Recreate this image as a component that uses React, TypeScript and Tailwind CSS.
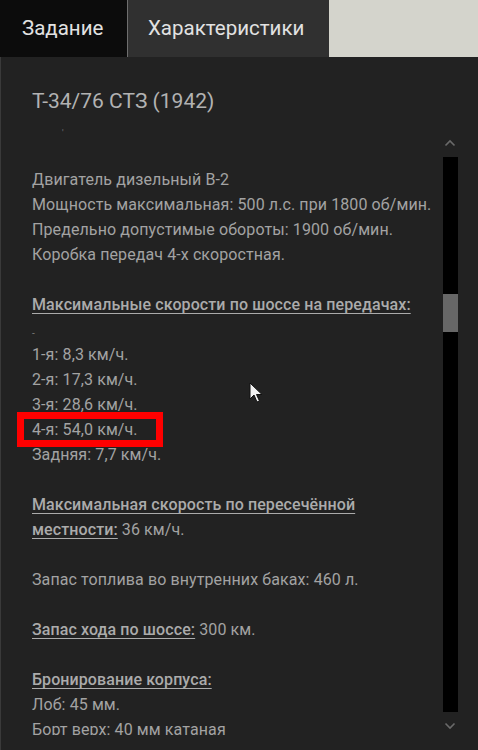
import React from "react";

const FONT = { fontFamily: "Roboto, 'Liberation Sans', sans-serif" };

// Body line: 25px row
function Line({ children, className = "" }: { children?: React.ReactNode; className?: string }) {
  return <div className={"relative h-[25px] leading-[25px] whitespace-nowrap " + className}>{children}</div>;
}

function Heading({ children }: { children: React.ReactNode }) {
  return (
    <span className="font-medium text-[#ababab] underline decoration-1 underline-offset-[3px]">
      {children}
    </span>
  );
}

function Chevron({ down }: { down?: boolean }) {
  return (
    <svg width="12" height="8" viewBox="0 0 12 8" className="block">
      <path
        d={down ? "M1.5 1.5 L6 6 L10.5 1.5" : "M1.5 6.5 L6 2 L10.5 6.5"}
        stroke="#6a6a6a"
        strokeWidth="1.6"
        fill="none"
      />
    </svg>
  );
}

function Scrollbar() {
  return (
    <div className="flex w-[16px] flex-col items-center pt-[82px]">
      <Chevron />
      <div className="mt-[10px] flex h-[555px] w-[15px] flex-col bg-black">
        <div className="h-[137px]" />
        <div className="h-[38px] bg-[#676767]" />
      </div>
      <div className="mt-[10px]">
        <Chevron down />
      </div>
    </div>
  );
}

export default function App() {
  return (
    <div className="relative flex h-[750px] w-[478px] flex-col overflow-hidden bg-[#222]" style={FONT}>
      {/* Tabs */}
      <div className="flex h-[57px] shrink-0 bg-[#d4d4cc]">
        <div className="flex w-[127px] items-center pl-[22px] text-[20.5px] text-[#e2e2e2] bg-[#0c0c0c]">
          Задание
        </div>
        <div className="w-px bg-[#6e6e6e]" />
        <div className="flex w-[201px] items-center pl-[20px] text-[20.5px] text-[#e2e2e2] bg-[#303030]">
          Характеристики
        </div>
      </div>

      {/* Panel */}
      <div className="flex flex-1 border-l border-[#3a3a3a] pr-[20px]">
        <div className="h-[678px] flex-1 overflow-hidden pl-[31px] pt-[30px] text-[16px] tracking-[0.1px] text-[#a3a3a3]">
          <div className="h-[28px] text-[21px] leading-[28px] tracking-normal text-[#b2b2b2]">T-34/76 СТЗ (1942)</div>
          <div className="h-[52px] pl-[30px] pt-[14px] text-[9px] leading-none text-[#777]">'</div>

          <Line>Двигатель дизельный В-2</Line>
          <Line>Мощность максимальная: 500 л.с. при 1800 об/мин.</Line>
          <Line>Предельно допустимые обороты: 1900 об/мин.</Line>
          <Line>Коробка передач 4-х скоростная.</Line>
          <Line />
          <Line>
            <Heading>Максимальные скорости по шоссе на передачах:</Heading>
          </Line>
          <Line className="pt-[4px] text-[10px] text-[#777]">-</Line>
          <Line>1-я: 8,3 км/ч.</Line>
          <Line>2-я: 17,3 км/ч.</Line>
          <Line>3-я: 28,6 км/ч.</Line>
          <Line>
            4-я: 54,0 км/ч.
            <span className="absolute left-[-15px] top-[-5px] h-[35px] w-[146px] border-[7px] border-[#ff0000]" />
          </Line>
          <Line>Задняя: 7,7 км/ч.</Line>
          <Line />
          <Line>
            <Heading>Максимальная скорость по пересечённой </Heading>
          </Line>
          <Line>
            <Heading>местности:</Heading> 36 км/ч.
          </Line>
          <Line />
          <Line>Запас топлива во внутренних баках: 460 л.</Line>
          <Line />
          <Line>
            <Heading>Запас хода по шоссе:</Heading> 300 км.
          </Line>
          <Line />
          <Line>
            <Heading>Бронирование корпуса:</Heading>
          </Line>
          <Line>Лоб: 45 мм.</Line>
          <Line>Борт верх: 40 мм катаная</Line>
        </div>
        <Scrollbar />
      </div>

      {/* Mouse cursor */}
      <svg
        width="14"
        height="22"
        viewBox="0 0 14 22"
        className="absolute left-[249px] top-[382px]"
      >
        <path d="M1 1 L1 17 L5 13 L8 20 L10.5 19 L7.5 12.5 L13 12.5 Z" fill="#f2f2f2" stroke="#111" strokeWidth="1" />
      </svg>
    </div>
  );
}
